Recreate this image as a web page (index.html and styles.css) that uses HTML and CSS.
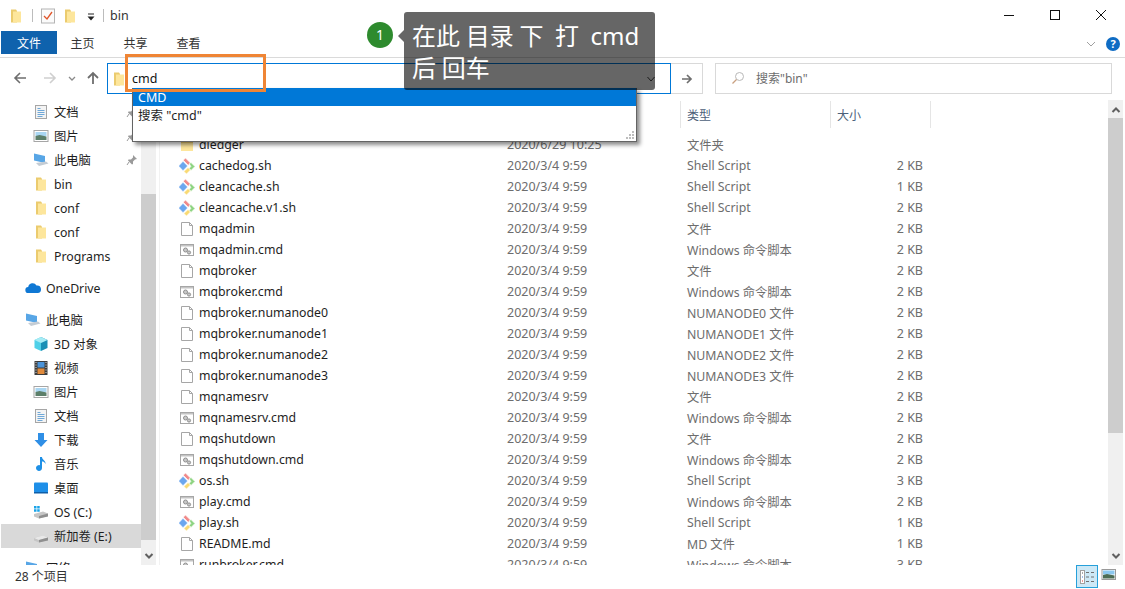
FILE: index.html
```html
<!DOCTYPE html>
<html lang="zh-CN">
<head>
    <meta charset="UTF-8">
    <title>bin</title>
    <link rel="stylesheet" href="styles.css">
</head>
<body>
    <svg class="sprites" width="0" height="0">
        <symbol id="i-folder" viewBox="0 0 16 16">
            <path d="M3 1.500h5l1 1.500v11.500H3z" fill="#ebcb6e"/>
            <path d="M5 3.500h8v11H5z" fill="#fde69c"/>
        </symbol>
        <symbol id="i-folder-wide" viewBox="0 0 16 16">
            <path d="M2 3h5l1.500 1.500H14v9H2z" fill="#ebcb6e"/>
            <path d="M2 6h12v8H2z" fill="#fde69c"/>
        </symbol>
        <symbol id="i-git" viewBox="1 0 16 16">
            <path d="M5 3.300L9.700 8 5 12.700 0.500 8z" fill="#6ba6ee" stroke="#fff" stroke-width=".7"/>
            <path d="M5.200 2.200L7.500 0 12.500 5 10.200 7.200z" fill="#f08a8a" stroke="#fff" stroke-width=".7"/>
            <path d="M11.300 5.800L13 4.500 17 8.500 13 12.500 11 10.500 12.800 8.500z" fill="#8ed482" stroke="#fff" stroke-width=".7"/>
            <path d="M5.800 13.500L10 9.500 12.500 12 8.500 16z" fill="#f9da74" stroke="#fff" stroke-width=".7"/>
        </symbol>
        <symbol id="i-file" viewBox="0 0 16 16">
            <path d="M2.500 1.500h8l3 3v10h-11z" fill="#fff" stroke="#a6a6a6"/>
            <path d="M10.500 1.500v3h3" fill="none" stroke="#a6a6a6"/>
        </symbol>
        <symbol id="i-cmd" viewBox="0 0 16 16">
            <rect x="1.500" y="2.500" width="13" height="11" fill="#fff" stroke="#a6a6a6"/>
            <rect x="2" y="3" width="12" height="1.500" fill="#c4c4c4"/>
            <circle cx="6.500" cy="8" r="2" fill="#c9c9c9" stroke="#8f8f8f"/>
            <circle cx="10" cy="10.500" r="1.600" fill="#c9c9c9" stroke="#8f8f8f"/>
        </symbol>
        <symbol id="i-doc" viewBox="0 0 16 16">
            <rect x="2.500" y="1.500" width="11" height="13" fill="#f4f4f4" stroke="#a6a6a6"/>
            <path d="M4.500 4.500h3M4.500 6.500h7M4.500 8.500h7M4.500 10.500h7M4.500 12.500h5" stroke="#6fa8d8"/>
        </symbol>
        <symbol id="i-pic" viewBox="0 0 16 16">
            <rect x="1" y="2.500" width="14" height="11" fill="#fff" stroke="#a6a6a6"/>
            <rect x="2.500" y="4" width="11" height="4" fill="#a9d6f2"/>
            <path d="M2.500 8l4-1 7 1.500V12h-11z" fill="#5c7f6a"/>
        </symbol>
        <symbol id="i-pc" viewBox="0 0 16 16">
            <path d="M1 1.500l11 2.500v7L1 8.500z" fill="#58a6e6"/>
            <path d="M3 11l10-1.500 2.500 2L6 14z" fill="#c4ccd4"/>
        </symbol>
        <symbol id="i-cloud" viewBox="0 0 16 16">
            <path d="M3.500 13a3 3 0 0 1-.3-6A4.500 4.500 0 0 1 11.500 5.500 3.800 3.800 0 0 1 12.800 13z" fill="#0f78d4"/>
        </symbol>
        <symbol id="i-cube" viewBox="0 0 16 16">
            <path d="M8 1l6.500 3v8L8 15z" fill="#1a8fb5"/>
            <path d="M8 1L1.500 4v8L8 15z" fill="#4fd0e8"/>
            <path d="M8 1l6.500 3L8 7 1.500 4z" fill="#a6ecf5"/>
        </symbol>
        <symbol id="i-film" viewBox="0 0 16 16">
            <rect x="1.500" y="1" width="13" height="14" fill="#3d3d3d"/>
            <rect x="4.500" y="2" width="7" height="5.500" fill="#4b93d8"/>
            <rect x="4.500" y="8.500" width="7" height="5.500" fill="#e08a3c"/>
            <path d="M2.500 2.500h1M2.500 5h1M2.500 7.500h1M2.500 10h1M2.500 12.500h1M12.500 2.500h1M12.500 5h1M12.500 7.500h1M12.500 10h1M12.500 12.500h1" stroke="#ddd"/>
        </symbol>
        <symbol id="i-down" viewBox="0 0 16 16">
            <path d="M5 1h6v7h3.500L8 15 1.500 8H5z" fill="#2f8fe6"/>
        </symbol>
        <symbol id="i-note" viewBox="0 0 16 16">
            <path d="M7 1h2c0 3 4 3.500 3.500 7-1-2-2-2.500-3.500-2.500V12a3 3 0 1 1-2-2.800z" fill="#1e90e6"/>
        </symbol>
        <symbol id="i-desk" viewBox="0 0 16 16">
            <rect x="1" y="2.500" width="14" height="10" rx="1" fill="#1e8fe8"/>
            <rect x="1" y="12" width="14" height="1.500" fill="#0f5fa8"/>
        </symbol>
        <symbol id="i-drive" viewBox="0 0 16 16">
            <path d="M1 10l9-2.500 5 2v2.500L6 14.500 1 12.500z" fill="#c6c6c6"/>
            <path d="M1 10l9-2.500 5 2L6 12z" fill="#e8e8e8"/>
            <path d="M6 12v2.500l9-2V9.500z" fill="#8f8f8f"/>
        </symbol>
        <symbol id="i-win" viewBox="0 0 16 16">
            <path d="M1 10l9-2.500 5 2v2.500L6 14.500 1 12.500z" fill="#c6c6c6"/>
            <path d="M6 12v2.500l9-2V9.500z" fill="#8f8f8f"/>
            <path d="M1 2h2.500v2.500H1zM4.200 2h2.500v2.500H4.200zM1 5.200h2.500v2.500H1zM4.200 5.200h2.500v2.500H4.200z" fill="#19a3e8"/>
        </symbol>
        <symbol id="i-pin" viewBox="0 0 12 12">
            <path d="M7 1l4 4-2 .5-2 2 0 2.500-1 .5-4-4 .5-1H5l2-2z" fill="#9a9a9a"/>
            <path d="M3 8l-2 3" stroke="#9a9a9a"/>
        </symbol>
        <symbol id="i-up-chev" viewBox="0 0 10 10">
            <path d="M1.500 7L5 3.500 8.500 7" fill="none" stroke="#606060" stroke-width="2"/>
        </symbol>
        <symbol id="i-down-chev" viewBox="0 0 10 10">
            <path d="M1.500 3L5 6.500 8.500 3" fill="none" stroke="#606060" stroke-width="2"/>
        </symbol>
    </svg>

    <div class="window">
        <header class="titlebar">
            <svg class="qa-icon"><use href="#i-folder"/></svg>
            <span class="qa-sep"></span>
            <svg class="qa-icon qa-note" viewBox="0 0 16 16">
                <rect x="1.500" y="1" width="13" height="14" fill="#fbfbfb" stroke="#b4b4b4"/>
                <path d="M4 8l3 3 5-7" fill="none" stroke="#e0562b" stroke-width="1.300"/>
            </svg>
            <svg class="qa-icon"><use href="#i-folder"/></svg>
            <svg class="qa-drop" viewBox="0 0 10 10">
                <path d="M2 2h6" stroke="#222"/>
                <path d="M1.500 4.500h7L5 8.500z" fill="#222"/>
            </svg>
            <span class="qa-sep qa-sep-last"></span>
            <span class="title-text">bin</span>
            <div class="win-buttons">
                <svg viewBox="0 0 12 12"><path d="M1 6.500h10" stroke="#111"/></svg>
                <svg viewBox="0 0 12 12"><rect x="1.500" y="1.500" width="9" height="9" fill="none" stroke="#111"/></svg>
                <svg viewBox="0 0 12 12"><path d="M1 1l10 10M11 1L1 11" stroke="#111"/></svg>
            </div>
        </header>

        <nav class="ribbon">
            <span class="tab tab-file">文件</span>
            <span class="tab">主页</span>
            <span class="tab">共享</span>
            <span class="tab">查看</span>
            <svg class="ribbon-chev" viewBox="0 0 10 10"><path d="M1 3l4 4 4-4" fill="none" stroke="#a0a0a0"/></svg>
            <span class="help">?</span>
        </nav>

        <div class="navbar">
            <svg class="nav-arrow" viewBox="0 0 14 14"><path d="M13 7H2M7 2L2 7l5 5" fill="none" stroke="#6e6e6e" stroke-width="1.600"/></svg>
            <svg class="nav-arrow nav-off" viewBox="0 0 14 14"><path d="M1 7h11M7 2l5 5-5 5" fill="none" stroke="#cfcfcf" stroke-width="1.600"/></svg>
            <svg class="nav-recent" viewBox="0 0 10 10"><path d="M2 4l3 3 3-3" fill="none" stroke="#8a8a8a" stroke-width="1.300"/></svg>
            <svg class="nav-arrow nav-up" viewBox="0 0 14 14"><path d="M7 13V2M2 7l5-5 5 5" fill="none" stroke="#6e6e6e" stroke-width="1.800"/></svg>
            <div class="address">
                <svg class="addr-icon"><use href="#i-folder"/></svg>
                <span class="addr-text">cmd</span>
                <svg class="addr-chev" viewBox="0 0 10 10"><path d="M1.500 3L5 7l3.500-4" fill="none" stroke="#444"/></svg>
            </div>
            <div class="go-btn">
                <svg viewBox="0 0 12 12"><path d="M1 6h9M6 2l4 4-4 4" fill="none" stroke="#6e6e6e" stroke-width="1.700"/></svg>
            </div>
            <div class="search">
                <svg viewBox="0 0 14 14"><circle cx="8.500" cy="5.500" r="4" fill="none" stroke="#b8b8b8"/><path d="M5.500 8.500L1.500 12.500" stroke="#c9a080" stroke-width="1.300"/></svg>
                <span>搜索"bin"</span>
            </div>
        </div>

        <div class="main">
            <aside class="sidebar">
                <div class="side-row"><svg class="side-icon"><use href="#i-doc"/></svg><span>文档</span><svg class="pin"><use href="#i-pin"/></svg></div>
                <div class="side-row"><svg class="side-icon"><use href="#i-pic"/></svg><span>图片</span><svg class="pin"><use href="#i-pin"/></svg></div>
                <div class="side-row side-pc"><svg class="side-icon"><use href="#i-pc"/></svg><span>此电脑</span><svg class="pin"><use href="#i-pin"/></svg></div>
                <div class="side-row"><svg class="side-icon"><use href="#i-folder"/></svg><span>bin</span></div>
                <div class="side-row"><svg class="side-icon"><use href="#i-folder"/></svg><span>conf</span></div>
                <div class="side-row"><svg class="side-icon"><use href="#i-folder"/></svg><span>conf</span></div>
                <div class="side-row"><svg class="side-icon"><use href="#i-folder"/></svg><span>Programs</span></div>

                <div class="side-row side-top side-group"><svg class="side-icon"><use href="#i-cloud"/></svg><span>OneDrive</span></div>

                <div class="side-row side-top side-group"><svg class="side-icon"><use href="#i-pc"/></svg><span>此电脑</span></div>
                <div class="side-row"><svg class="side-icon"><use href="#i-cube"/></svg><span>3D 对象</span></div>
                <div class="side-row"><svg class="side-icon"><use href="#i-film"/></svg><span>视频</span></div>
                <div class="side-row"><svg class="side-icon"><use href="#i-pic"/></svg><span>图片</span></div>
                <div class="side-row"><svg class="side-icon"><use href="#i-doc"/></svg><span>文档</span></div>
                <div class="side-row"><svg class="side-icon"><use href="#i-down"/></svg><span>下载</span></div>
                <div class="side-row"><svg class="side-icon"><use href="#i-note"/></svg><span>音乐</span></div>
                <div class="side-row"><svg class="side-icon"><use href="#i-desk"/></svg><span>桌面</span></div>
                <div class="side-row"><svg class="side-icon"><use href="#i-win"/></svg><span>OS (C:)</span></div>
                <div class="side-row side-selected"><svg class="side-icon"><use href="#i-drive"/></svg><span>新加卷 (E:)</span></div>

                <div class="side-row side-top side-group"><svg class="side-icon"><use href="#i-pc"/></svg><span>网络</span></div>
            </aside>

            <div class="scrollbar">
                <svg class="chev"><use href="#i-up-chev"/></svg>
                <span class="gap-side"></span>
                <span class="thumb thumb-side"></span>
                <svg class="chev chev-bottom"><use href="#i-down-chev"/></svg>
            </div>

            <section class="pane">
                <div class="col-head">
                    <span class="head-spacer"></span>
                    <span class="head-cell head-type">类型</span>
                    <span class="head-cell head-size">大小</span>
                    <span class="head-cell head-end"></span>
                </div>
                <div class="files">
                    <div class="file"><svg class="file-icon"><use href="#i-folder-wide"/></svg><span class="name">dledger</span><span class="date">2020/6/29 10:25</span><span>文件夹</span><span></span></div>
                    <div class="file"><svg class="file-icon"><use href="#i-git"/></svg><span class="name">cachedog.sh</span><span class="date">2020/3/4 9:59</span><span>Shell Script</span><span class="size">2 KB</span></div>
                    <div class="file"><svg class="file-icon"><use href="#i-git"/></svg><span class="name">cleancache.sh</span><span class="date">2020/3/4 9:59</span><span>Shell Script</span><span class="size">1 KB</span></div>
                    <div class="file"><svg class="file-icon"><use href="#i-git"/></svg><span class="name">cleancache.v1.sh</span><span class="date">2020/3/4 9:59</span><span>Shell Script</span><span class="size">2 KB</span></div>
                    <div class="file"><svg class="file-icon"><use href="#i-file"/></svg><span class="name">mqadmin</span><span class="date">2020/3/4 9:59</span><span>文件</span><span class="size">2 KB</span></div>
                    <div class="file"><svg class="file-icon"><use href="#i-cmd"/></svg><span class="name">mqadmin.cmd</span><span class="date">2020/3/4 9:59</span><span>Windows 命令脚本</span><span class="size">2 KB</span></div>
                    <div class="file"><svg class="file-icon"><use href="#i-file"/></svg><span class="name">mqbroker</span><span class="date">2020/3/4 9:59</span><span>文件</span><span class="size">2 KB</span></div>
                    <div class="file"><svg class="file-icon"><use href="#i-cmd"/></svg><span class="name">mqbroker.cmd</span><span class="date">2020/3/4 9:59</span><span>Windows 命令脚本</span><span class="size">2 KB</span></div>
                    <div class="file"><svg class="file-icon"><use href="#i-file"/></svg><span class="name">mqbroker.numanode0</span><span class="date">2020/3/4 9:59</span><span>NUMANODE0 文件</span><span class="size">2 KB</span></div>
                    <div class="file"><svg class="file-icon"><use href="#i-file"/></svg><span class="name">mqbroker.numanode1</span><span class="date">2020/3/4 9:59</span><span>NUMANODE1 文件</span><span class="size">2 KB</span></div>
                    <div class="file"><svg class="file-icon"><use href="#i-file"/></svg><span class="name">mqbroker.numanode2</span><span class="date">2020/3/4 9:59</span><span>NUMANODE2 文件</span><span class="size">2 KB</span></div>
                    <div class="file"><svg class="file-icon"><use href="#i-file"/></svg><span class="name">mqbroker.numanode3</span><span class="date">2020/3/4 9:59</span><span>NUMANODE3 文件</span><span class="size">2 KB</span></div>
                    <div class="file"><svg class="file-icon"><use href="#i-file"/></svg><span class="name">mqnamesrv</span><span class="date">2020/3/4 9:59</span><span>文件</span><span class="size">2 KB</span></div>
                    <div class="file"><svg class="file-icon"><use href="#i-cmd"/></svg><span class="name">mqnamesrv.cmd</span><span class="date">2020/3/4 9:59</span><span>Windows 命令脚本</span><span class="size">2 KB</span></div>
                    <div class="file"><svg class="file-icon"><use href="#i-file"/></svg><span class="name">mqshutdown</span><span class="date">2020/3/4 9:59</span><span>文件</span><span class="size">2 KB</span></div>
                    <div class="file"><svg class="file-icon"><use href="#i-cmd"/></svg><span class="name">mqshutdown.cmd</span><span class="date">2020/3/4 9:59</span><span>Windows 命令脚本</span><span class="size">2 KB</span></div>
                    <div class="file"><svg class="file-icon"><use href="#i-git"/></svg><span class="name">os.sh</span><span class="date">2020/3/4 9:59</span><span>Shell Script</span><span class="size">3 KB</span></div>
                    <div class="file"><svg class="file-icon"><use href="#i-cmd"/></svg><span class="name">play.cmd</span><span class="date">2020/3/4 9:59</span><span>Windows 命令脚本</span><span class="size">2 KB</span></div>
                    <div class="file"><svg class="file-icon"><use href="#i-git"/></svg><span class="name">play.sh</span><span class="date">2020/3/4 9:59</span><span>Shell Script</span><span class="size">1 KB</span></div>
                    <div class="file"><svg class="file-icon"><use href="#i-file"/></svg><span class="name">README.md</span><span class="date">2020/3/4 9:59</span><span>MD 文件</span><span class="size">1 KB</span></div>
                    <div class="file"><svg class="file-icon"><use href="#i-cmd"/></svg><span class="name">runbroker.cmd</span><span class="date">2020/3/4 9:59</span><span>Windows 命令脚本</span><span class="size">3 KB</span></div>
                </div>
            </section>

            <div class="scrollbar scrollbar-main">
                <svg class="chev"><use href="#i-up-chev"/></svg>
                <span class="thumb thumb-main"></span>
                <svg class="chev chev-bottom"><use href="#i-down-chev"/></svg>
            </div>
        </div>

        <footer class="statusbar">
            <span class="count">28 个项目</span>
            <span class="view-btn view-on">
                <svg class="view-list" viewBox="0 0 20 20">
                    <rect x="3.500" y="3.500" width="4" height="13" fill="#fff" stroke="#a0a0a0"/>
                    <path d="M5 6h1" stroke="#555"/><path d="M5 10h1" stroke="#3a7bd5"/><path d="M5 14h1" stroke="#d33"/>
                    <path d="M9 5.500h3M14 5.500h3M9 10h3M14 10h3M9 14.500h3M14 14.500h3" stroke="#707070"/>
                </svg>
            </span>
            <span class="view-btn">
                <svg class="view-thumb" viewBox="0 0 16 14">
                    <rect x="1" y="1.500" width="13.500" height="10" fill="#fff" stroke="#9a9a9a"/>
                    <rect x="2" y="2.500" width="11.500" height="4" fill="#8cc8ef"/>
                    <path d="M2 7l4-1 7.500 1.500v3H2z" fill="#4d6d55"/>
                </svg>
            </span>
        </footer>
    </div>

    <!-- autocomplete list, marker and annotation lie over the window -->
    <div class="suggest">
        <div class="suggest-row suggest-on">CMD</div>
        <div class="suggest-row">搜索 "cmd"</div>
        <svg class="grip" viewBox="0 0 10 10"><path d="M7 1h2v2H7zM4 4h2v2H4zM7 4h2v2H7zM1 7h2v2H1zM4 7h2v2H4zM7 7h2v2H7z" fill="#bdbdbd"/></svg>
    </div>
    <div class="marker"></div>
    <div class="step">1</div>
    <div class="tip">在此 目录 下 &nbsp;打 &nbsp;cmd 后 回车</div>
</body>
</html>
```

FILE: styles.css
```css
* {
    margin: 0;
    padding: 0;
    box-sizing: border-box;
}

body {
    font-family: 'Noto Sans', 'Noto Sans CJK SC', sans-serif;
    font-size: 12px;
    color: #1e1e1e;
    background: #fff;
    overflow: hidden;
    height: 589px;
    position: relative;
}

.sprites {
    position: absolute;
}

.window {
    display: flex;
    flex-direction: column;
    height: 589px;
}

/* title bar */
.titlebar {
    display: flex;
    align-items: center;
    height: 31px;
    padding-left: 8px;
}

.qa-icon {
    width: 16px;
    height: 16px;
}

.qa-sep {
    width: 1px;
    height: 13px;
    background: #bcbcbc;
    margin: 0 7px 0 8px;
}

.qa-note {
    margin-right: 6px;
}

.qa-drop {
    width: 10px;
    height: 10px;
    margin-left: 8px;
    margin-top: 2px;
}

.qa-sep-last {
    margin: 0 7px 0 7px;
}

.title-text {
    margin-left: -1px;
    margin-top: -1px;
    font-size: 12.5px;
    color: #333;
}

.win-buttons {
    display: flex;
    gap: 34px;
    margin-left: auto;
    margin-right: 18px;
    margin-top: -1px;
}

.win-buttons svg {
    width: 12px;
    height: 12px;
}

/* ribbon tabs */
.ribbon {
    display: flex;
    align-items: stretch;
    height: 27px;
    padding: 0 1px 3px 1px;
    border-bottom: 1px solid #dadada;
}

.tab {
    width: 53px;
    line-height: 26px;
    text-align: center;
    color: #333;
}

.tab-file {
    width: 56px;
    margin-right: -1px;
    background: #0f62ad;
    color: #fff;
}

.ribbon-chev {
    width: 10px;
    height: 10px;
    margin: 8px 0 0 auto;
}

.help {
    width: 14px;
    height: 14px;
    margin: 6px 4px 0 10px;
    border-radius: 50%;
    background: #0f6cc4;
    color: #fff;
    font-size: 11px;
    font-weight: 700;
    line-height: 14px;
    text-align: center;
}

/* address row */
.navbar {
    display: flex;
    align-items: flex-start;
    height: 42px;
    padding: 5px 13px 0 13px;
}

.nav-arrow {
    width: 14px;
    height: 14px;
    margin: 8px 16px 0 0;
}

.nav-off {
    margin-right: 10px;
}

.nav-recent {
    width: 10px;
    height: 10px;
    margin: 10px 9px 0 0;
}

.nav-up {
    margin-right: 7px;
}

.address {
    display: flex;
    align-items: center;
    width: 564px;
    height: 31px;
    padding: 0 14px 0 3px;
    border: 1px solid #0078d7;
}

.addr-icon {
    width: 16px;
    height: 16px;
}

.addr-text {
    margin: -1px 0 0 5px;
    font-size: 12.5px;
    color: #111;
}

.addr-chev {
    width: 10px;
    height: 10px;
    margin-left: auto;
}

.go-btn {
    display: flex;
    align-items: center;
    justify-content: center;
    width: 32px;
    height: 31px;
    border: 1px solid #d9d9d9;
    border-left: 0;
}

.go-btn svg {
    width: 12px;
    height: 12px;
}

.search {
    display: flex;
    align-items: center;
    gap: 11px;
    flex: 1;
    height: 31px;
    margin-left: 12px;
    padding: 0 0 2px 15px;
    border: 1px solid #d9d9d9;
    color: #6d6d6d;
}

.search svg {
    width: 14px;
    height: 14px;
}

/* main area */
.main {
    display: flex;
    height: 465px;
    overflow: hidden;
}

.sidebar {
    width: 141px;
    flex-shrink: 0;
    padding-left: 1px;
    font-size: 12.3px;
}

.side-row {
    display: flex;
    align-items: center;
    height: 24px;
    padding-left: 32px;
}

.side-top {
    padding-left: 24px;
}

.side-group {
    margin-top: 8px;
}

.side-selected {
    background: #d9d9d9;
}

.side-icon {
    width: 16px;
    height: 16px;
    margin-right: 5px;
    flex-shrink: 0;
}

.pin {
    width: 12px;
    height: 12px;
    margin-left: auto;
    margin-right: 3px;
}

.scrollbar {
    display: flex;
    flex-direction: column;
    align-items: center;
    width: 15px;
    flex-shrink: 0;
    background: #f0f0f0;
}

.chev {
    width: 10px;
    height: 10px;
    margin: 5px 0 3px;
    flex-shrink: 0;
}

.chev-bottom {
    margin: auto 0 4px;
}

.gap-side {
    height: 76px;
    flex-shrink: 0;
}

.thumb {
    width: 100%;
    flex-shrink: 0;
    background: #cdcdcd;
}

.thumb-side {
    height: 346px;
}

.thumb-main {
    height: 315px;
}

.scrollbar-main {
    margin-right: 2px;
}

.pane {
    flex: 1;
    min-width: 0;
    margin-left: 3px;
    border-left: 1px solid #f2f2f2;
}

.col-head {
    display: flex;
    height: 34px;
    padding-top: 1px;
}

.head-spacer {
    width: 520px;
}

.head-cell {
    height: 27px;
    line-height: 29px;
    padding-left: 6px;
    border-left: 1px solid #e5e5e5;
    color: #4c607a;
}

.head-type {
    width: 150px;
}

.head-size {
    width: 100px;
}

.head-end {
    width: 1px;
}

.file {
    display: grid;
    grid-template-columns: 347px 180px 157px 79px;
    align-items: center;
    height: 21px;
    font-size: 12.3px;
    color: #6d6d6d;
    white-space: nowrap;
}

.name {
    color: #1e1e1e;
    padding-left: 39px;
    grid-column: 1;
    grid-row: 1;
}

.file .file-icon {
    grid-column: 1;
    grid-row: 1;
    width: 16px;
    height: 16px;
    margin-left: 19px;
}

.date,
.size {
    font-size: 12.5px;
}

.size {
    text-align: right;
}

/* status bar */
.statusbar {
    display: flex;
    align-items: flex-start;
    height: 24px;
    padding-right: 5px;
}

.count {
    margin: 2px auto 0 15px;
    color: #333;
}

.view-btn {
    display: flex;
    align-items: center;
    justify-content: center;
    width: 22px;
    height: 23px;
}

.view-on {
    background: #cce8f6;
    border: 1px solid #26a0da;
}

.view-list {
    width: 20px;
    height: 20px;
}

.view-thumb {
    width: 16px;
    height: 14px;
    margin-top: -3px;
}

/* overlays */
.suggest {
    position: absolute;
    left: 132px;
    top: 88px;
    width: 505px;
    height: 54px;
    background: #fff;
    border: 1px solid #646464;
    border-top: 0;
    box-shadow: 3px 3px 4px rgba(0, 0, 0, 0.45);
    font-size: 12.5px;
}

.suggest-row {
    height: 18px;
    line-height: 20px;
    padding-left: 5px;
    color: #1e1e1e;
}

.suggest-on {
    background: #0078d7;
    color: #fff;
}

.grip {
    position: absolute;
    right: 1px;
    bottom: 1px;
    width: 10px;
    height: 10px;
}

.marker {
    position: absolute;
    left: 125px;
    top: 54px;
    width: 141px;
    height: 38px;
    border: 3px solid #ef8535;
}

.step {
    position: absolute;
    left: 367px;
    top: 22px;
    width: 26px;
    height: 26px;
    border-radius: 50%;
    background: #2e8b2e;
    color: #fff;
    font-size: 14px;
    line-height: 26px;
    text-align: center;
}

.tip {
    position: absolute;
    left: 404px;
    top: 12px;
    width: 251px;
    height: 78px;
    padding: 8px 8px;
    border-radius: 3px;
    background: rgba(0, 0, 0, 0.6);
    color: #fff;
    font-size: 24px;
    line-height: 32px;
    word-spacing: -0.5px;
}

.tip::before {
    content: "";
    position: absolute;
    left: -6px;
    top: 18px;
    border: 6px solid transparent;
    border-left: 0;
    border-right-color: rgba(0, 0, 0, 0.6);
}
```
